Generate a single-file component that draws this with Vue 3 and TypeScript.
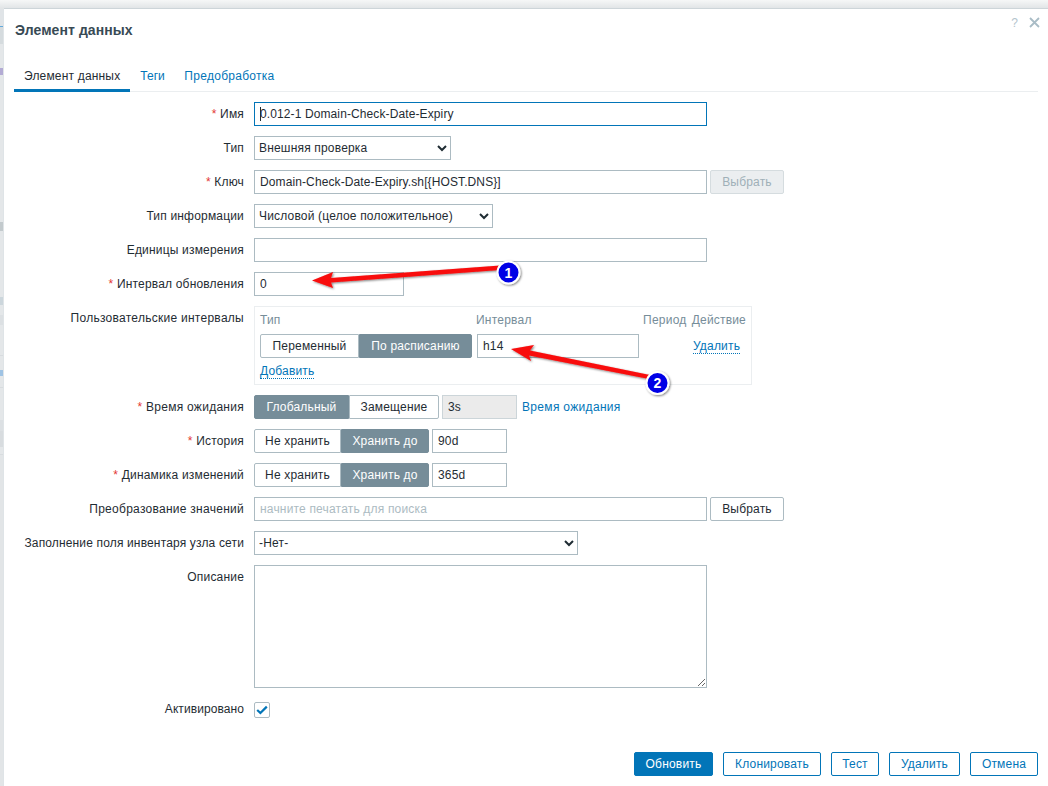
<script setup lang="ts">
const footer = ['Клонировать', 'Тест', 'Удалить', 'Отмена']
</script>

<template>
  <div class="page">
    <div class="strip"></div>
    <main class="dialog">
      <header class="head">
        <h1>Элемент данных</h1>
        <span class="help">?</span>
        <svg class="close" width="11" height="11" viewBox="0 0 11 11"><path d="M1 1l9 9M10 1l-9 9" stroke="#a9bcc6" stroke-width="1.8" fill="none" /></svg>
      </header>
      <nav class="tabs">
        <a class="tab active">Элемент данных</a>
        <a class="tab tight">Теги</a>
        <a class="tab loose">Предобработка</a>
      </nav>
      <form class="form" @submit.prevent>
        <label class="lbl"><b>*</b> Имя</label>
        <div class="val"><span class="caretbox"><input class="inp wide focus latin" value="0.012-1 Domain-Check-Date-Expiry" /><i class="caret"></i></span></div>

        <label class="lbl">Тип</label>
        <div class="val"><select class="sel w197"><option>Внешняя проверка</option></select></div>

        <label class="lbl"><b>*</b> Ключ</label>
        <div class="val"><input class="inp wide latin" value="Domain-Check-Date-Expiry.sh[{HOST.DNS}]" /><button type="button" class="btn gray" disabled>Выбрать</button></div>

        <label class="lbl">Тип информации</label>
        <div class="val"><select class="sel w239"><option>Числовой (целое положительное)</option></select></div>

        <label class="lbl">Единицы измерения</label>
        <div class="val"><input class="inp wide" /></div>

        <label class="lbl"><b>*</b> Интервал обновления</label>
        <div class="val"><input class="inp w150" value="0" /></div>

        <label class="lbl loose">Пользовательские интервалы</label>
        <div class="val">
          <div class="custom">
            <div class="chead">
              <span class="c1">Тип</span><span class="c2">Интервал</span><span class="c3">Период</span><span>Действие</span>
            </div>
            <div class="crow">
              <div class="toggle c1">
                <span class="opt" style="width:99px">Переменный</span><span class="opt on" style="width:113px">По расписанию</span>
              </div>
              <input class="inp w162" value="h14" />
              <a class="link dotted del">Удалить</a>
            </div>
            <a class="link dotted add">Добавить</a>
          </div>
        </div>

        <label class="lbl loose"><b>*</b> Время ожидания</label>
        <div class="val">
          <div class="toggle"><span class="opt on" style="width:95px">Глобальный</span><span class="opt" style="width:90px">Замещение</span></div>
          <input class="inp w75 off" value="3s" disabled />
          <a class="link hint loose">Время ожидания</a>
        </div>

        <label class="lbl"><b>*</b> История</label>
        <div class="val">
          <div class="toggle"><span class="opt" style="width:87px">Не хранить</span><span class="opt on" style="width:88px">Хранить до</span></div>
          <input class="inp w75" value="90d" />
        </div>

        <label class="lbl"><b>*</b> Динамика изменений</label>
        <div class="val">
          <div class="toggle"><span class="opt" style="width:87px">Не хранить</span><span class="opt on" style="width:88px">Хранить до</span></div>
          <input class="inp w75" value="365d" />
        </div>

        <label class="lbl loose">Преобразование значений</label>
        <div class="val"><input class="inp wide" placeholder="начните печатать для поиска" /><button type="button" class="btn">Выбрать</button></div>

        <label class="lbl fit">Заполнение поля инвентаря узла сети</label>
        <div class="val"><select class="sel w324"><option>-Нет-</option></select></div>

        <label class="lbl">Описание</label>
        <div class="val"><textarea class="area"></textarea></div>

        <label class="lbl chk">Активировано</label>
        <div class="val chkval">
          <span class="check" role="checkbox" aria-checked="true">
            <svg width="12" height="10" viewBox="0 0 12 10"><path d="M1.2 5l3.2 3L10.8 1.6" stroke="#0275b8" stroke-width="2.2" fill="none" /></svg>
          </span>
        </div>
      </form>
      <footer class="foot">
        <button type="button" class="act primary">Обновить</button>
        <button v-for="f in footer" :key="f" type="button" class="act">{{ f }}</button>
      </footer>
    </main>

    <svg class="marks" width="1048" height="786" viewBox="0 0 1048 786">
      <defs>
        <filter id="sh" x="-30%" y="-30%" width="160%" height="160%"><feDropShadow dx="1" dy="1" stdDeviation="1.2" flood-color="#000" flood-opacity=".5" /></filter>
      </defs>
      <g filter="url(#sh)">
        <path d="M312 280.5L333 272L331 278L500 265.5L500 270L331 282.5L333 288Z" fill="#f80a0a" />
      </g>
      <g filter="url(#sh)">
        <path d="M511 349L534 345L530 350.5L650 375L649 379L529 355.5L531 361Z" fill="#f80a0a" />
      </g>
      <g filter="url(#sh)">
        <circle cx="508.5" cy="272.5" r="11" fill="#0000e6" stroke="#fff" stroke-width="2" />
        <circle cx="657.5" cy="383" r="11" fill="#0000e6" stroke="#fff" stroke-width="2" />
      </g>
      <text x="508.5" y="277.5" class="num">1</text>
      <text x="657.5" y="388" class="num">2</text>
    </svg>
  </div>
</template>

<style>
html, body { margin: 0; background: #fff; }
</style>

<style scoped>
.page {
  position: relative;
  display: flex;
  width: 1048px;
  height: 786px;
  overflow: hidden;
  background: linear-gradient(#f6f7f7 0, #e2e5e7 8px);
  font: 12px/14px "Liberation Sans", Arial, sans-serif;
  letter-spacing: .18px;
  color: #1f2c33;
}
.strip {
  width: 4px;
  flex: none;
  margin-top: 9px;
  background: linear-gradient(
    #e0e4e7 17px,
    #62a9dc 17px, #62a9dc 18px,
    #d5dbde 18px, #d5dbde 35px,
    #e4e7e9 35px, #e4e7e9 59px,
    #b3abd4 59px, #b3abd4 66px,
    #e4e7e9 66px, #e4e7e9 213px,
    #c3cacd 213px, #c3cacd 222px,
    #e4e7e9 222px, #e4e7e9 288px,
    #ccd6dc 288px, #ccd6dc 296px,
    #e4e7e9 296px, #e4e7e9 306px,
    #dce0e3 306px, #dce0e3 316px,
    #e4e7e9 316px, #e4e7e9 346px,
    #d8dcdf 346px, #d8dcdf 347px,
    #e4e7e9 347px, #e4e7e9 361px,
    #9fc3e4 361px, #9fc3e4 367px,
    #e4e7e9 367px, #e4e7e9 378px,
    #d8dcdf 378px, #d8dcdf 379px,
    #e4e7e9 379px, #e4e7e9 411px,
    #dce0e3 411px, #dce0e3 422px,
    #d8dcdf 422px, #d8dcdf 438px,
    #e4e7e9 438px, #e4e7e9 445px,
    #d8dcdf 445px, #d8dcdf 446px,
    #e2e5e7 446px
  );
}
.dialog {
  flex: 1;
  margin-top: 9px;
  background: #fff;
  box-shadow: 0 -1px 0 #cdd5d9, -1px 0 0 #dfe4e7;
  padding: 0 10px;
  display: flex;
  flex-direction: column;
}
.head { position: relative; height: 43px; }
h1 {
  margin: 0;
  position: absolute;
  left: 1px;
  top: 14px;
  font-size: 14px;
  line-height: 14px;
  font-weight: bold;
  letter-spacing: .08px;
  color: #384a55;
}
.help { position: absolute; right: 20px; top: 7px; color: #b4c4cd; font-size: 12px; }
.close { position: absolute; right: -2px; top: 8px; }
.tabs { display: flex; height: 40px; border-bottom: 1px solid #ebeef0; box-sizing: border-box; }
.tab {
  height: 40px;
  box-sizing: border-box;
  padding: 17px 10px 0;
  color: #0275b8;
}
.tab.tight { width: 44px; letter-spacing: 0; white-space: nowrap; }
.tab.loose { letter-spacing: .28px; }
.tab.active { color: #1f2c33; border-bottom: 3px solid #0275b8; }
.form {
  display: grid;
  grid-template-columns: 230px 1fr;
  column-gap: 10px;
  row-gap: 10px;
  margin-top: 10px;
}
.lbl { text-align: right; line-height: 24px; white-space: nowrap; }
.lbl.loose { letter-spacing: .27px; }
.lbl.fit { letter-spacing: .15px; }
.lbl.chk { line-height: 23px; letter-spacing: .08px; }
.lbl b { color: #e33734; font-weight: normal; }
.val { display: flex; align-items: flex-start; min-height: 24px; }
.inp, .sel, .area {
  box-sizing: border-box;
  height: 24px;
  margin: 0;
  border: 1px solid #acbbc2;
  border-radius: 0;
  background: #fff;
  color: #1f2c33;
  font: 12px "Liberation Sans", Arial, sans-serif;
  letter-spacing: .18px;
  padding: 0 5px;
  outline: none;
}
.inp.latin { letter-spacing: .11px; }
.inp::placeholder { color: #acbbc2; opacity: 1; }
.sel { padding: 0; }
.wide { width: 453px; }
.w150 { width: 150px; }
.w162 { width: 162px; }
.w75 { width: 75px; margin-left: 3px; }
.w197 { width: 197px; }
.w239 { width: 239px; }
.w324 { width: 324px; }
.focus { border-color: #0275b8; }
.caretbox { position: relative; display: block; }
.caret { position: absolute; left: 6px; top: 5px; width: 1px; height: 14px; background: #1f2c33; }
.off { background: #ebebeb; border-color: #ccd5d9; }
.btn {
  box-sizing: border-box;
  width: 74px;
  height: 24px;
  margin: 0 0 0 3px;
  padding: 0;
  border: 1px solid #acbbc2;
  border-radius: 2px;
  background: #fff;
  color: #1f2c33;
  font: 12px "Liberation Sans", Arial, sans-serif;
  letter-spacing: .18px;
}
.btn.gray { background: #ebeef0; color: #9fb0b8; border-color: #d5dcdf; }
.custom {
  box-sizing: border-box;
  width: 498px;
  height: 79px;
  border: 1px solid #ebeef0;
  padding: 5px;
  position: relative;
}
.chead { display: flex; color: #768d99; height: 17px; line-height: 17px; }
.chead span { white-space: nowrap; }
.chead .c1 { width: 217px; }
.chead .c2 { width: 168px; letter-spacing: .25px; }
.chead .c3 { width: 49px; letter-spacing: .25px; }
.crow { display: flex; align-items: center; margin-top: 5px; height: 24px; }
.crow .c1 { margin-right: 5px; }
.del { margin-left: 54px; }
.add { position: absolute; left: 5px; top: 57px; }
.toggle { display: flex; height: 24px; flex: none; }
.opt {
  box-sizing: border-box;
  height: 24px;
  line-height: 22px;
  text-align: center;
  border: 1px solid #acbbc2;
  background: #fff;
  white-space: nowrap;
}
.opt:first-child { border-radius: 2px 0 0 2px; }
.opt:last-child { border-radius: 0 2px 2px 0; }
.opt.on { background: #768d99; border-color: #768d99; color: #fff; }
.link { color: #0275b8; white-space: nowrap; }
.link.loose { letter-spacing: .32px; }
.dotted { border-bottom: 1px dotted #0275b8; line-height: 14px; }
.hint { margin-left: 5px; line-height: 24px; }
.area { display: block; width: 453px; height: 123px; resize: both; padding: 5px; }
.chkval { min-height: 22px; align-items: center; }
.check {
  box-sizing: border-box;
  width: 16px;
  height: 16px;
  border: 1px solid #acbbc2;
  border-radius: 2px;
  display: flex;
  align-items: center;
  justify-content: center;
}
.foot {
  display: flex;
  justify-content: flex-end;
  gap: 10px;
  margin-top: 31px;
}
.act {
  box-sizing: border-box;
  height: 24px;
  padding: 0;
  border: 1px solid #0275b8;
  border-radius: 2px;
  background: #fff;
  color: #0275b8;
  font: 12px "Liberation Sans", Arial, sans-serif;
  letter-spacing: .18px;
  width: 68px;
}
.act:nth-child(1) { width: 79px; }
.act:nth-child(2) { width: 98px; }
.act:nth-child(3) { width: 48px; }
.act:nth-child(4) { width: 71px; }
.primary { background: #0275b8; color: #fff; }
.marks { position: absolute; left: 0; top: 0; pointer-events: none; }
.num {
  fill: #fff;
  font: bold 14px "Liberation Sans", Arial, sans-serif;
  text-anchor: middle;
}
</style>
